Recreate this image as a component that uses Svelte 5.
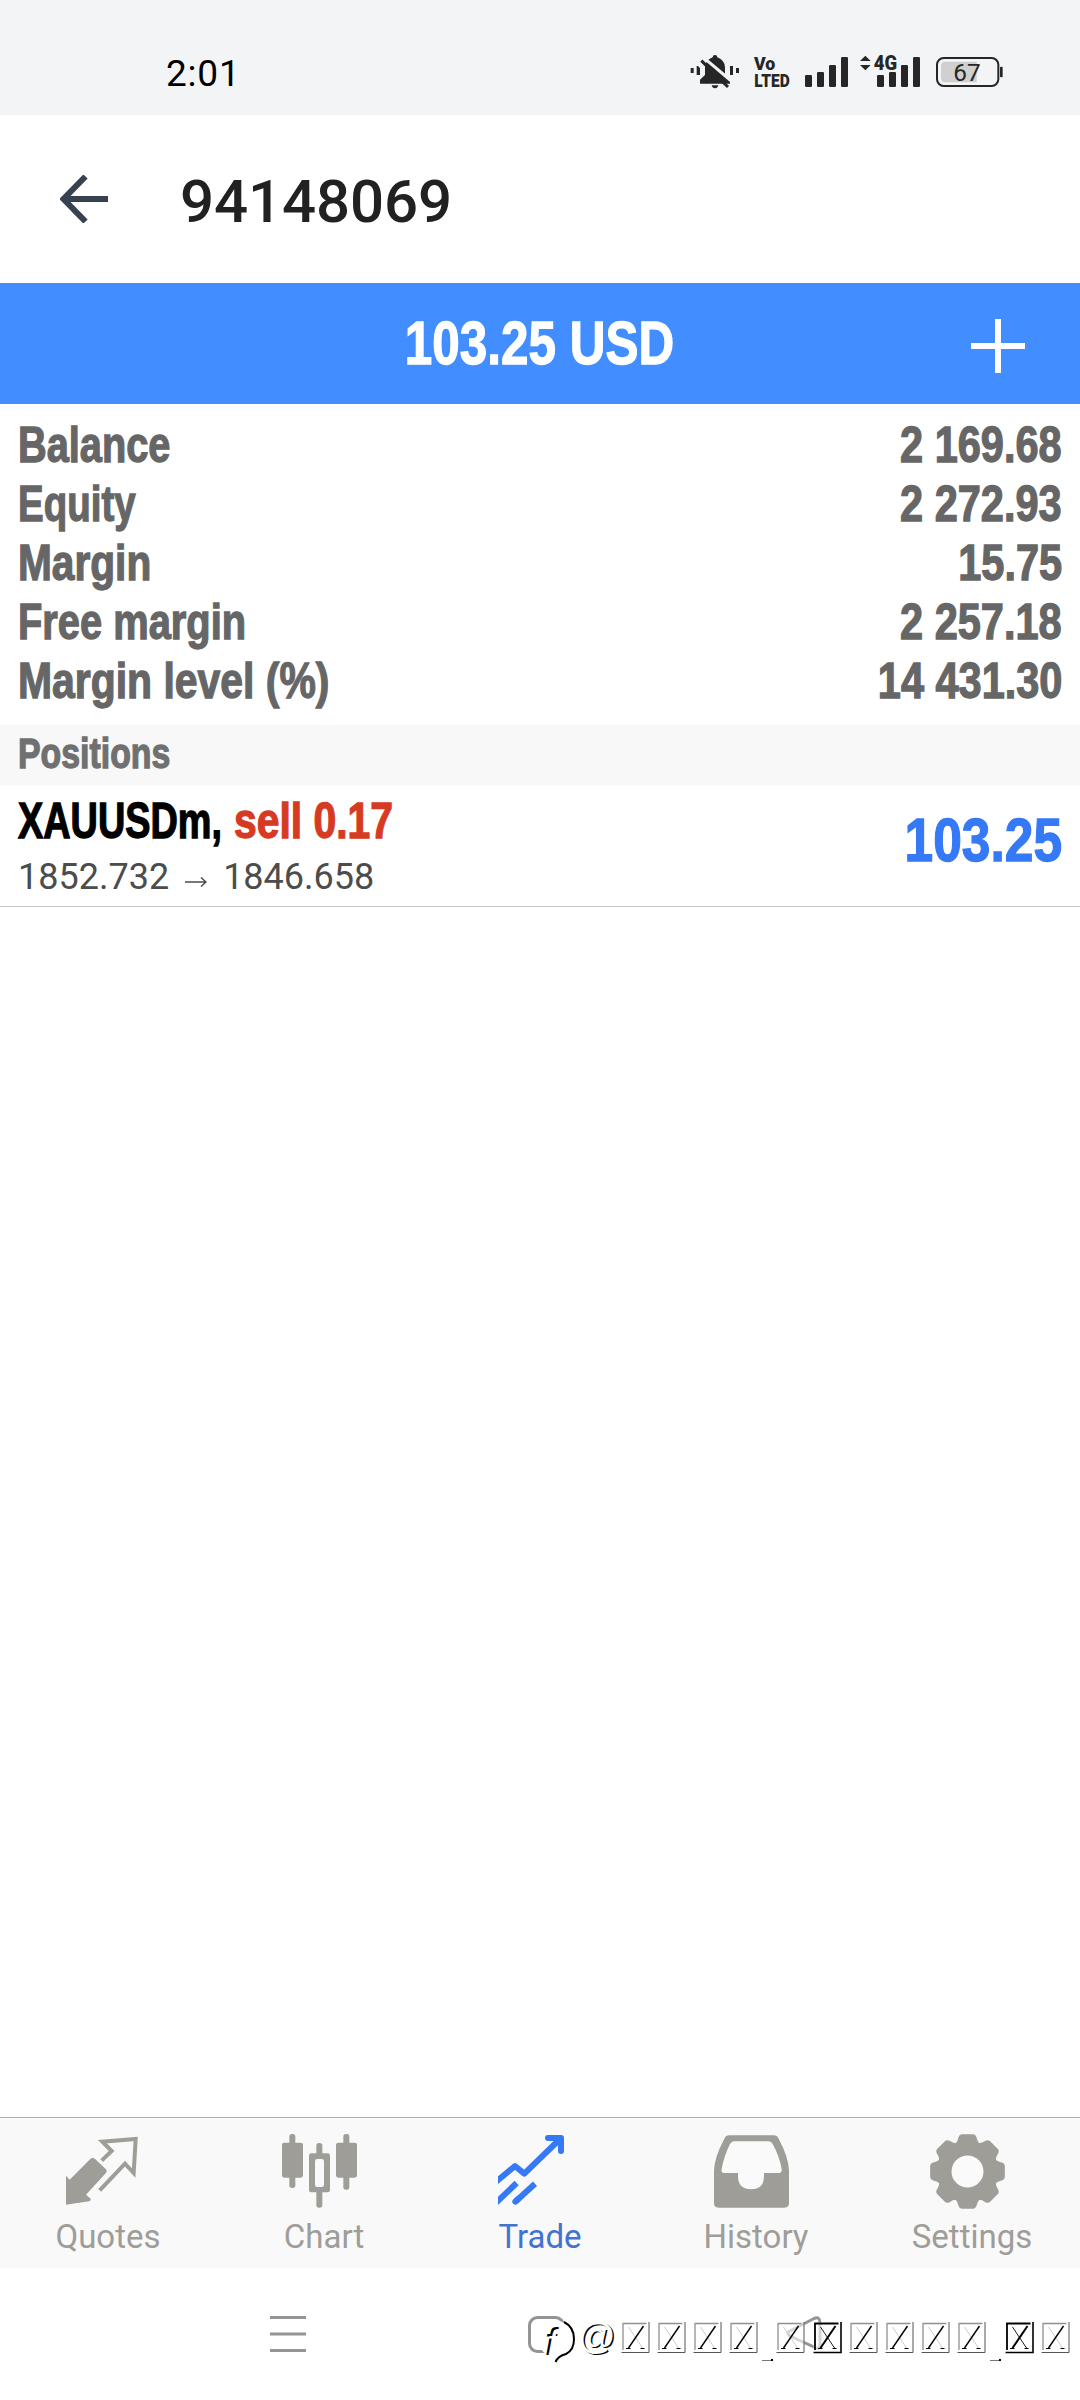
<script lang="ts">
  interface Row {
    label: string;
    value: string;
    scale: number;
  }

  // scale narrows each label to the width of the condensed face
  const summary: Row[] = [
    { label: 'Balance', value: '2 169.68', scale: 0.795 },
    { label: 'Equity', value: '2 272.93', scale: 0.77 },
    { label: 'Margin', value: '15.75', scale: 0.813 },
    { label: 'Free margin', value: '2 257.18', scale: 0.797 },
    { label: 'Margin level (%)', value: '14 431.30', scale: 0.818 },
  ];

  const tabs = ['Quotes', 'Chart', 'Trade', 'History', 'Settings'];
  const active = 'Trade';

  const teeth = [0, 45, 90, 135, 180, 225, 270, 315];

  // left edges of the placeholder glyphs in the watermark
  const boxes = [
    { x: 101.5, bold: false },
    { x: 137.5, bold: false },
    { x: 173.5, bold: false },
    { x: 209.5, bold: false },
    { x: 256.5, bold: false },
    { x: 293.5, bold: true },
    { x: 329.5, bold: false },
    { x: 365.5, bold: false },
    { x: 401.5, bold: false },
    { x: 437.5, bold: false },
    { x: 485.5, bold: true },
    { x: 521.5, bold: false },
  ];
</script>

<div class="screen">
  <div class="status-bar">
    <span class="clock">2:01</span>
    <svg class="status-icons" viewBox="0 0 1140 270">
      <g fill="#252625">
        <rect x="92" y="114" width="9" height="15" />
        <rect x="110" y="108" width="10" height="27" />
        <rect x="210" y="108" width="9" height="27" />
        <rect x="228" y="114" width="9" height="15" />
        <path d="M120 161 V149 L135 135 V112 Q135 92 158 82 Q158 75 165 75 Q172 75 172 82 Q195 92 195 112 V135 L210 149 V161 Z" />
        <path d="M155 166 H175 Q173 175 165 175 Q157 175 155 166 Z" />
        <path d="M116 83 L214 166" stroke="#f3f4f6" stroke-width="9" transform="translate(7 -7)" />
        <path d="M124 92 L204 171" stroke="#252625" stroke-width="9" />
        <path d="M109 92 L128 112 V122 L104 98 Z" fill="#f3f4f6" />

        <rect x="435" y="135" width="21" height="36" rx="4" />
        <rect x="471" y="126" width="21" height="45" rx="4" />
        <rect x="507" y="105" width="21" height="66" rx="4" />
        <rect x="543" y="81" width="21" height="90" rx="4" />

        <rect x="651" y="135" width="21" height="36" rx="4" />
        <rect x="687" y="126" width="21" height="45" rx="4" />
        <rect x="723" y="105" width="21" height="66" rx="4" />
        <rect x="759" y="81" width="21" height="90" rx="4" />
        <path d="M600 93 L616 77 L632 93 Z M600 105 L616 121 L632 105 Z" />
      </g>
      <g class="badge">
        <text x="282" y="121" font-size="55" textLength="64" lengthAdjust="spacingAndGlyphs">Vo</text>
        <text x="283" y="170" font-size="55" textLength="106" lengthAdjust="spacingAndGlyphs">LTED</text>
        <text x="641" y="121" font-size="60" textLength="70" lengthAdjust="spacingAndGlyphs">4G</text>
      </g>
      <rect x="831" y="84" width="184" height="84" rx="20" fill="none" stroke="#252625" stroke-width="6" />
      <path d="M950 95 V157 H856 Q843 157 843 144 V108 Q843 95 856 95 Z" fill="#d0d0d0" />
      <rect x="1020" y="110" width="8" height="32" rx="3" fill="#252625" />
      <text class="percent" x="880" y="153" font-size="73" textLength="82">67</text>
    </svg>
  </div>

  <header class="title-bar">
    <svg class="back" viewBox="0 0 48 48">
      <path d="M25.500 1.500 L3.500 24 L25.500 46.500 M4 24 H48" fill="none" stroke="#36424f" stroke-width="6" />
    </svg>
    <h1>94148069</h1>
  </header>

  <div class="profit-bar">
    <span class="condensed profit">103.25 USD</span>
    <svg class="plus" viewBox="0 0 54 54">
      <path d="M27 0 V54 M0 27 H54" stroke="#fff" stroke-width="6" />
    </svg>
  </div>

  <div class="summary">
    {#each summary as row (row.label)}
      <div class="row">
        <span class="condensed" style="transform: scaleX({row.scale})">{row.label}</span>
        <span class="condensed value">{row.value}</span>
      </div>
    {/each}
  </div>

  <div class="section"><span class="condensed">Positions</span></div>

  <div class="position">
    <div class="details">
      <div class="symbol">
        <div class="name"><span class="condensed">XAUUSDm,</span></div>
        <span class="condensed sell">sell 0.17</span>
      </div>
      <div class="prices">
        <span>1852.732</span>
        <svg viewBox="0 0 22 14"><path d="M0 7 H21 M16 2.500 L21 7 L16 11.500" fill="none" stroke="#4c4c4c" stroke-width="1.500" /></svg>
        <span>1846.658</span>
      </div>
    </div>
    <span class="condensed result">103.25</span>
  </div>

  <div class="spacer"></div>

  <nav class="tabs">
    {#each tabs as tab (tab)}
      <div class="tab" class:active={tab === active}>
        <svg viewBox="0 0 225 225" fill="currentColor">
          {#if tab === 'Quotes'}
            <path d="M0 125 L11 137 L72 76 Q80 68 88 76 L119 105 Q125 111 119 118 L60 182 L74 194 Q76 200 69 202 L0 212 Z" />
            <path d="M107 80 L137 51 L109 23 L209 15 L203 117 L177 89 L101 169" fill="none" stroke="currentColor" stroke-width="12" />
          {:else if tab === 'Chart'}
            <rect y="26" width="63" height="105" rx="7" />
            <rect x="22" width="18" height="162" rx="8" />
            <rect x="162" y="26" width="63" height="105" rx="7" />
            <rect x="184" width="18" height="167" rx="8" />
            <rect x="103" y="27" width="18" height="194" rx="8" />
            <rect x="81" y="58" width="63" height="117" rx="7" />
            <rect x="99" y="75" width="27" height="84" rx="7" fill="#f9f9f9" />
          {:else if tab === 'Trade'}
            <g fill="none" stroke="currentColor" stroke-width="18">
              <path d="M-8 145 L51 96 L79 119 L186 15" stroke-linejoin="round" />
              <path d="M150 12 H189 V51" stroke-linecap="round" stroke-linejoin="round" />
              <path d="M-8 208 L56 147" />
              <path d="M52 203 L111 149" />
              <path d="M52 203 L60 195" stroke-linecap="round" />
            </g>
            <path d="M165 12 H189 V40 Z" />
          {:else if tab === 'History'}
            <path d="M46 4 H180 Q189 4 194 14 Q224 70 225 110 V208 Q225 221 211 221 H14 Q0 221 0 208 V110 Q1 70 31 14 Q36 4 46 4 Z" />
            <path d="M60 22 H164 Q172 22 176 30 Q196 66 203 105 Q204 117 196 117 H150 V130 Q148 166 112 166 Q74 166 72 130 V117 H30 Q21 117 23 105 Q30 66 48 30 Q52 22 60 22 Z" fill="#fafafa" />
          {:else}
            {#each teeth as angle}
              <path d="M-42 -80 Q-30 -86 -27 -103 Q-24 -112 -16 -112 H16 Q24 -112 27 -103 Q30 -86 42 -80 Z" transform="translate(112.500 112.500) rotate({angle})" />
            {/each}
            <circle cx="112.500" cy="112.500" r="90" />
            <circle cx="112.500" cy="112.500" r="48" fill="#fafafa" />
          {/if}
        </svg>
        <span>{tab}</span>
      </div>
    {/each}
  </nav>

  <div class="system-nav">
    <svg viewBox="0 0 1080 132">
      <g fill="none" stroke="#949494" stroke-width="3">
        <path d="M270 49.500 H306 M270 66 H306 M270 82.500 H306" />
        <rect x="529.500" y="49.500" width="34" height="34" rx="8" />
        <path d="M790 63 L814 50.500 Q820 48 820 55 V75 Q820 83 814 79 L790 68 Q786 65 790 63 Z" />
      </g>
    </svg>
    <svg class="watermark" viewBox="0 0 560 70">
      <circle cx="36" cy="37" r="18" fill="#fff" />
      <path d="M44 20 Q54 25 54 37 Q54 48 46 52 Q38 54 35.500 60" fill="none" stroke="#000" stroke-width="2" />
      <text class="mark" x="25" y="53" font-size="38" font-style="italic" fill="#000">f</text>
      <text class="mark" x="27" y="54.500" font-size="38" font-style="italic" fill="#fff">f</text>
      <text class="mark" x="59.500" y="48" font-size="37" fill="#000">@</text>
      <text class="mark" x="58" y="46.500" font-size="37" fill="#fff">@</text>
      {#each boxes as box}
        <g transform="translate({box.x} 20)" fill="none">
          <rect x="0" y="0" width="28" height="30" fill="#fff" fill-opacity="0.600" />
          <path d="M1.500 28 V1.500 H25" stroke={box.bold ? '#000' : '#909090'} stroke-width={box.bold ? 1.8 : 1.3} />
          <path d="M27.500 0 V30.500 H0" stroke={box.bold ? '#000' : '#555'} stroke-width={box.bold ? 1.6 : 1} />
          <path d="M7 5 L21 26" stroke={box.bold ? '#222' : '#ccc'} stroke-width="1" />
          <path d="M22 4 L7 26" stroke="#000" stroke-width={box.bold ? 2 : 1.4} />
          <path d="M4.500 26.500 H9 M19 26.500 H23" stroke="#000" stroke-width="1" />
        </g>
      {/each}
      <path d="M242 58.500 H252 M470 58.500 H480" stroke="#777" stroke-width="1" />
      <path d="M251 58 H253 M479 58 H481" stroke="#000" stroke-width="2" />
    </svg>
  </div>
</div>

<style>
  :global(body) {
    background: #fff;
  }

  .screen {
    display: flex;
    flex-direction: column;
    width: 1080px;
    height: 2400px;
    overflow: hidden;
    background: #fff;
    font-family: Roboto, sans-serif;
  }

  .condensed {
    display: inline-block;
    font-family: 'Liberation Sans', sans-serif;
    font-weight: 700;
    white-space: nowrap;
    transform-origin: left center;
    -webkit-text-stroke: 1.3px currentColor;
  }

  .status-bar {
    display: flex;
    justify-content: space-between;
    height: 115px;
    box-sizing: border-box;
    padding: 30px 40px 0 166px;
    background: #f3f4f6;
  }

  .clock {
    font-size: 37px;
    line-height: 87px;
    letter-spacing: 0.8px;
    color: #000;
  }

  .status-icons {
    width: 380px;
    height: 90px;
  }

  .badge {
    font-family: Roboto, sans-serif;
    font-weight: 900;
    fill: #252625;
  }

  .percent {
    font-family: Roboto, sans-serif;
    fill: #252625;
  }

  .title-bar {
    display: flex;
    align-items: center;
    gap: 72px;
    height: 168px;
    padding-left: 60px;
  }

  .back {
    width: 48px;
    height: 48px;
  }

  h1 {
    margin: 5px 0 0;
    font-size: 60px;
    font-weight: 500;
    line-height: 70px;
    letter-spacing: -0.1px;
    color: #212121;
  }

  .profit-bar {
    display: grid;
    grid-template-columns: 1fr auto 1fr;
    align-items: center;
    height: 121px;
    background: #428dff;
  }

  .profit {
    grid-column: 2;
    font-size: 61.500px;
    line-height: 119px;
    margin-bottom: 2px;
    color: #fff;
    transform: scaleX(0.804);
    transform-origin: center;
  }

  .plus {
    width: 54px;
    height: 54px;
    justify-self: end;
    margin: 4px 55px 0 0;
  }

  .summary {
    height: 309px;
    padding: 12px 18px 0;
    font-size: 50px;
    line-height: 59px;
    color: #666;
  }

  .row {
    display: flex;
    justify-content: space-between;
    height: 59px;
  }

  .value {
    transform: scaleX(0.83);
    transform-origin: right center;
  }

  .section {
    height: 60px;
    padding-left: 18px;
    background: #f8f8f8;
    font-size: 42px;
    line-height: 58px;
    color: #707070;
  }

  .section .condensed {
    transform: scaleX(0.806);
  }

  .position {
    display: flex;
    justify-content: space-between;
    height: 121px;
    padding: 0 18px;
    border-bottom: 1px solid #c8c8c8;
  }

  .symbol {
    display: flex;
    padding-top: 7px;
    font-size: 50px;
    line-height: 59px;
    color: #000;
  }

  .name {
    width: 216px;
  }

  .name .condensed {
    transform: scaleX(0.757);
  }

  .sell {
    color: #d73a23;
    transform: scaleX(0.817);
  }

  .prices {
    display: flex;
    align-items: center;
    padding-top: 1px;
    font-size: 36px;
    line-height: 50px;
    color: #4c4c4c;
  }

  .prices svg {
    width: 22px;
    height: 14px;
    margin: 10px 16px 0;
  }

  .result {
    font-size: 61.500px;
    line-height: 110px;
    color: #3579f6;
    transform: scaleX(0.838);
    transform-origin: right center;
  }

  .spacer {
    flex: 1;
  }

  .tabs {
    display: grid;
    grid-template-columns: repeat(5, 216px);
    height: 150px;
    border-top: 1px solid #b0b0b0;
    background: #f9f9f9;
  }

  .tab {
    display: flex;
    flex-direction: column;
    color: #9e9d98;
    font-size: 33px;
    line-height: 40px;
    text-align: center;
  }

  .tab svg {
    width: 75px;
    height: 75px;
    margin: 16px 0 8px 66px;
  }

  .active {
    color: #3579f6;
  }

  .active span {
    color: #4273d0;
  }

  .system-nav {
    position: relative;
    height: 132px;
  }

  .system-nav svg {
    display: block;
    width: 1080px;
    height: 132px;
  }

  .system-nav .watermark {
    position: absolute;
    top: 34px;
    left: 520px;
    width: 560px;
    height: 70px;
  }

  .mark {
    font-family: 'Liberation Sans', sans-serif;
  }
</style>
